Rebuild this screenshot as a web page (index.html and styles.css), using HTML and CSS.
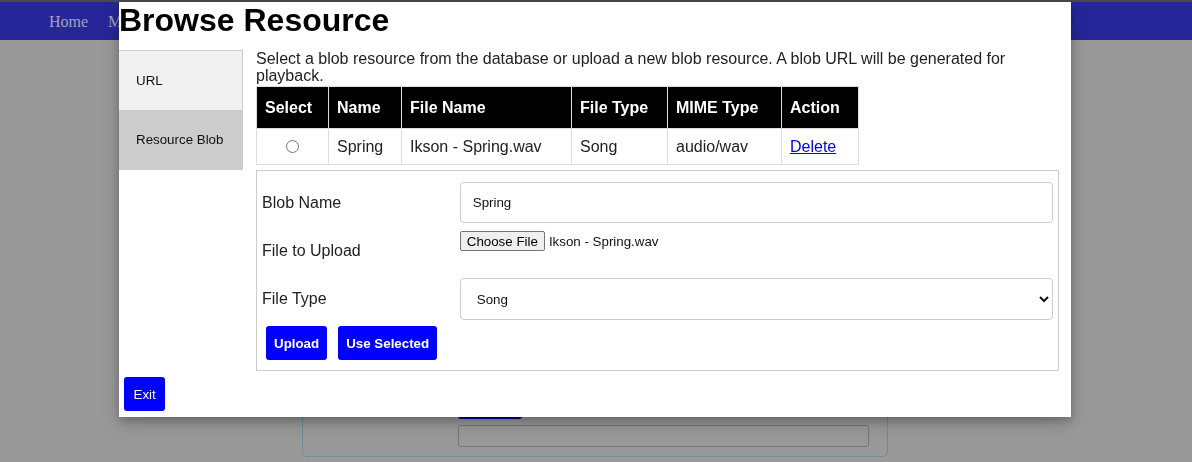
FILE: index.html
```html
<!DOCTYPE html>
<html lang="en">
<head>
<meta charset="utf-8">
<title>Browse Resource</title>
<link rel="stylesheet" href="styles.css">
</head>
<body>
<nav class="topnav">
  <a class="nav-link" href="#">Home</a>
  <a class="nav-link" href="#">Music</a>
</nav>
<main class="page">
  <section class="card">
    <div class="card-btn"></div>
    <div class="card-input"></div>
  </section>
</main>

<div class="modal">
  <h1 class="modal-title">Browse Resource</h1>
  <div class="modal-body">
    <div class="tabs">
      <button class="tab">URL</button>
      <button class="tab active">Resource Blob</button>
    </div>
    <div class="panel">
      <p class="intro">Select a blob resource from the database or upload a new blob resource. A blob URL will be generated for playback.</p>
      <table class="blob-table">
        <colgroup>
          <col class="c1"><col class="c2"><col class="c3"><col class="c4"><col class="c5"><col class="c6">
        </colgroup>
        <thead>
          <tr><th>Select</th><th>Name</th><th>File Name</th><th>File Type</th><th>MIME Type</th><th>Action</th></tr>
        </thead>
        <tbody>
          <tr>
            <td class="center"><input type="radio" name="sel" class="radio"></td>
            <td>Spring</td>
            <td>Ikson - Spring.wav</td>
            <td>Song</td>
            <td>audio/wav</td>
            <td><a href="#" class="link">Delete</a></td>
          </tr>
        </tbody>
      </table>
      <form class="blob-form">
        <div class="row">
          <div class="col-25"><label class="lbl">Blob Name</label></div>
          <div class="col-75"><input class="text-input" type="text" value="Spring"></div>
        </div>
        <div class="row">
          <div class="col-25"><label class="lbl">File to Upload</label></div>
          <div class="col-75 file-col"><button type="button" class="file-btn">Choose File</button><span class="file-name">Ikson - Spring.wav</span></div>
        </div>
        <div class="row">
          <div class="col-25"><label class="lbl">File Type</label></div>
          <div class="col-75"><select class="select"><option>Song</option><option>Sound Effect</option></select></div>
        </div>
        <div class="actions">
          <button type="button" class="btn bold">Upload</button>
          <button type="button" class="btn bold">Use Selected</button>
        </div>
      </form>
    </div>
  </div>
  <button type="button" class="btn exit">Exit</button>
</div>
</body>
</html>
```

FILE: styles.css
```css
* { box-sizing: border-box; }
html, body { margin: 0; padding: 0; }
body {
  background: #999999;
  font-family: "Liberation Sans", Arial, sans-serif;
  height: 462px;
  overflow: hidden;
}

/* underlying page (dimmed) */
.topnav {
  height: 40px;
  border-top: 2px solid #4a4a4a;
  background: #262699;
  display: flex;
  align-items: center;
  padding-left: 39px;
  padding-top: 1px;
}
.nav-link {
  font-family: "Liberation Serif", "Times New Roman", serif;
  font-size: 16px;
  color: #a3a3c2;
  text-decoration: none;
  padding: 0 10px;
}
.page {
  padding-top: 260px;
  display: flex;
  justify-content: center;
}
.card {
  width: 586px;
  margin-right: 2px;
  border: 1px solid #6a8f99;
  border-radius: 5px;
  padding: 88px 19px 9px 155px;
  display: flex;
  flex-direction: column;
  gap: 6px;
}
.card-btn {
  width: 64px;
  height: 30px;
  background: #000088;
  border-radius: 3px;
}
.card-input {
  width: 411px;
  height: 22px;
  border: 1px solid #777777;
  border-radius: 2px;
}

/* modal */
.modal {
  position: fixed;
  top: 2px;
  left: 119px;
  width: 952px;
  background: #ffffff;
  padding: 0 0 6px 0;
  box-shadow: 0 4px 8px 0 rgba(0,0,0,0.2), 0 6px 20px 0 rgba(0,0,0,0.19);
  color: #222;
}
.modal-title {
  margin: 0 0 11px 0;
  font-size: 32px;
  line-height: 37px;
  font-weight: bold;
  color: #000;
}
.modal-body {
  display: flex;
  align-items: flex-start;
}
.tabs {
  width: 124px;
  border: 1px solid #cccccc;
  border-left: none;
  background: #f1f1f1;
  display: flex;
  flex-direction: column;
}
.tab {
  display: block;
  width: 100%;
  height: 59px;
  border: none;
  margin: 0;
  padding: 0 17px;
  text-align: left;
  background: transparent;
  font-family: "Liberation Sans", Arial, sans-serif;
  font-size: 13.33px;
  color: #111;
}
.tab.active { background: #cccccc; }

.panel {
  width: 803px;
  margin-left: 13px;
}
.intro {
  margin: 0 0 2px 0;
  font-size: 16px;
  line-height: 17px;
}

.blob-table {
  width: 602px;
  border-collapse: collapse;
  table-layout: fixed;
  font-size: 16px;
}
.c1 { width: 72px; } .c2 { width: 73px; } .c3 { width: 170px; }
.c4 { width: 96px; } .c5 { width: 114px; } .c6 { width: 77px; }
.blob-table th, .blob-table td {
  border: 1px solid #dddddd;
  text-align: left;
  line-height: 19px;
  white-space: nowrap;
}
.blob-table th {
  background: #000;
  color: #fff;
  font-weight: bold;
  padding: 11px 8px;
}
.blob-table td {
  padding: 8px 8px;
  color: #222;
}
.blob-table td.center { text-align: center; }
.radio { margin: 0; vertical-align: -1px; width: 13px; height: 13px; }
.link { color: #0000ee; }

.blob-form {
  margin-top: 5px;
  border: 1px solid #cccccc;
  padding: 5px 5px 5px 5px;
}
.row {
  display: flex;
  margin-top: 6px;
}
.col-25 { width: 25%; }
.col-75 { width: 75%; }
.lbl {
  display: inline-block;
  padding: 12px 12px 12px 0;
  font-size: 16px;
  line-height: 18px;
  color: #222;
}
.text-input, .select {
  width: 100%;
  border: 1px solid #cccccc;
  border-radius: 4px;
  padding: 12px;
  font-family: "Liberation Sans", Arial, sans-serif;
  font-size: 13.33px;
  background: #fff;
  color: #111;
  margin: 0;
}
.text-input { height: 41px; }
.select { height: 42px; }
.file-col {
  display: flex;
  align-items: center;
  gap: 4px;
  align-self: flex-start;
  padding-top: 1px;
}
.file-btn {
  font-family: "Liberation Sans", Arial, sans-serif;
  font-size: 13.33px;
  background: #efefef;
  border: 1px solid #767676;
  border-radius: 2px;
  padding: 1px 6px;
  height: 20px;
  color: #000;
  margin: 0;
}
.file-name {
  font-size: 13.33px;
  color: #111;
}
.actions {
  display: flex;
  gap: 11px;
  margin-top: 6px;
  padding: 0 0 5px 4px;
}
.btn {
  background: #0000ff;
  color: #fff;
  border: none;
  border-radius: 3px;
  height: 34px;
  padding: 0 8px;
  font-family: "Liberation Sans", Arial, sans-serif;
  font-size: 13.33px;
}
.btn.bold { font-weight: bold; }
.exit {
  margin: 6px 0 0 5px;
  padding: 0 9.5px;
  display: block;
}
```
